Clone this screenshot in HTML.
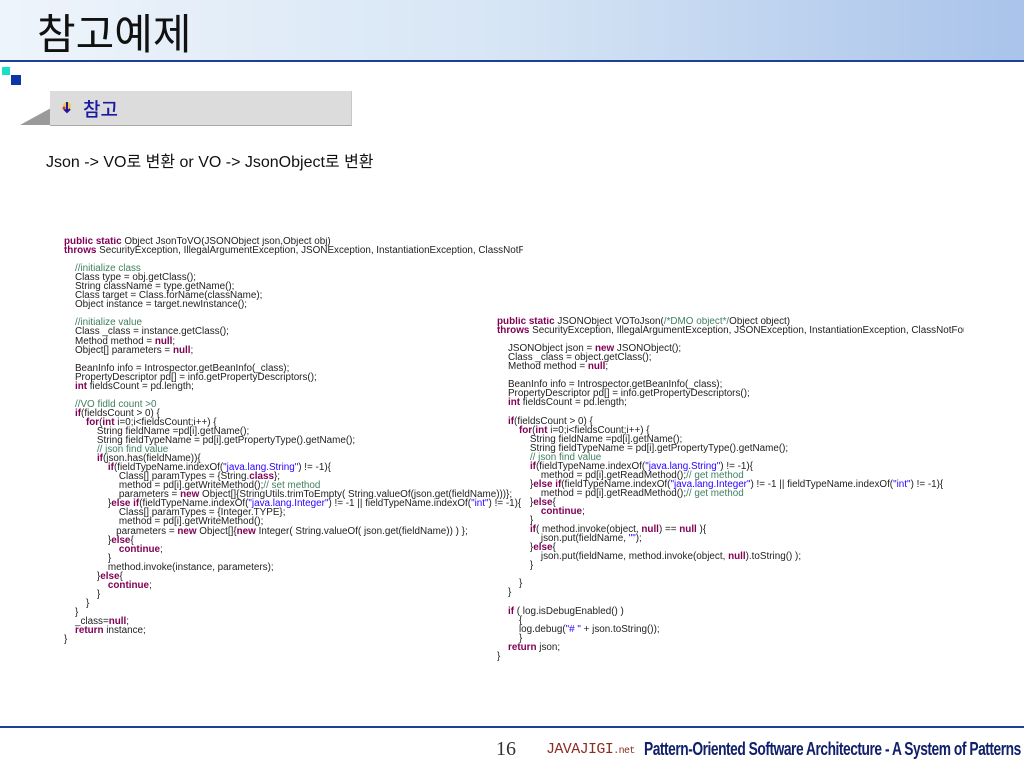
<!DOCTYPE html>
<html><head><meta charset="utf-8"><style>
body{margin:0;width:1024px;height:768px;background:#fff;position:relative;overflow:hidden;font-family:"Liberation Sans","Noto Sans CJK KR",sans-serif}
.hdr{position:absolute;left:0;top:0;width:1024px;height:60px;background:linear-gradient(90deg,#eef4fb 0%,#d6e5f5 50%,#a9c3ea 100%)}
.hline{position:absolute;left:0;top:60px;width:1024px;height:2px;background:#1f3f96}
.title{position:absolute;left:37px;top:4px;font-size:42px;color:#111;font-family:"Noto Sans CJK KR",sans-serif;font-weight:400;letter-spacing:0px;line-height:56px}
.sq1{position:absolute;left:2px;top:67px;width:8px;height:8px;background:#19e0c4}
.sq2{position:absolute;left:11px;top:75px;width:10px;height:10px;background:#0a36a6}
.box{position:absolute;left:50px;top:91px;width:301px;height:34px;background:#dcdcdc;border-bottom:1px solid #a8a8a8;border-right:1px solid #c8c8c8}
.tri{position:absolute;left:20px;top:108px;width:0;height:0;border-top:17px solid transparent;border-right:31px solid #9a9a9a}
.box span{position:absolute;left:33px;top:4px;font-size:19px;color:#1a1aa0;font-family:"Noto Sans CJK KR",sans-serif;font-weight:500}
.ic{position:absolute;left:62px;top:100px;width:10px;height:14px}
.sub{position:absolute;left:46px;top:148px;font-size:16px;color:#111}
pre{position:absolute;margin:0;font-family:"Liberation Sans","Noto Sans CJK KR",sans-serif;font-size:9.9px;line-height:9.05px;color:#222;overflow:hidden;white-space:pre}
.k{color:#7f0055;font-weight:bold}.c{color:#3f7f5f}.s{color:#2a00ff}
.fline{position:absolute;left:0;top:726px;width:1024px;height:2px;background:#1f3f96}
.num{position:absolute;left:496px;top:738px;font-size:20px;font-family:"Liberation Serif",serif;color:#333}
.jv{position:absolute;left:546px;top:741px;font-family:"Liberation Mono",monospace;font-size:15px;color:#8a2e24;letter-spacing:-0.6px;white-space:nowrap}
.jv small{font-size:10px}
.pat{position:absolute;left:644px;top:739px;font-size:18px;color:#10206a;font-weight:bold;letter-spacing:-0.6px;white-space:nowrap;transform:scaleX(0.765);transform-origin:left}
</style></head><body>
<div class="hdr"></div><div class="hline"></div>
<div class="title">참고예제</div>
<div class="sq1"></div><div class="sq2"></div>
<div class="tri"></div>
<div class="box"><span>참고</span></div>
<svg class="ic" viewBox="0 0 10 14"><circle cx="5" cy="6" r="4" fill="#f4c84a"/><path d="M5 2v10M2 9l3 3 3-3" stroke="#1a1aa0" stroke-width="2" fill="none"/><circle cx="2" cy="8" r="1.5" fill="#e03030"/></svg>
<div class="sub">Json -&gt; VO로 변환 or VO -&gt; JsonObject로 변환</div>
<pre style="left:64px;top:237px;width:459px;height:410px"><span class="k">public static</span> Object JsonToVO(JSONObject json,Object obj)
<span class="k">throws</span> SecurityException, IllegalArgumentException, JSONException, InstantiationException, ClassNotFoundException

    <span class="c">//initialize class</span>
    Class type = obj.getClass();
    String className = type.getName();
    Class target = Class.forName(className);
    Object instance = target.newInstance();

    <span class="c">//initialize value</span>
    Class _class = instance.getClass();
    Method method = <span class="k">null</span>;
    Object[] parameters = <span class="k">null</span>;

    BeanInfo info = Introspector.getBeanInfo(_class);
    PropertyDescriptor pd[] = info.getPropertyDescriptors();
    <span class="k">int</span> fieldsCount = pd.length;

    <span class="c">//VO fidld count &gt;0</span>
    <span class="k">if</span>(fieldsCount &gt; 0) {
        <span class="k">for</span>(<span class="k">int</span> i=0;i&lt;fieldsCount;i++) {
            String fieldName =pd[i].getName();
            String fieldTypeName = pd[i].getPropertyType().getName();
            <span class="c">// json find value</span>
            <span class="k">if</span>(json.has(fieldName)){
                <span class="k">if</span>(fieldTypeName.indexOf(<span class="s">"java.lang.String"</span>) != -1){
                    Class[] paramTypes = {String.<span class="k">class</span>};
                    method = pd[i].getWriteMethod();<span class="c">// set method</span>
                    parameters = <span class="k">new</span> Object[]{StringUtils.trimToEmpty( String.valueOf(json.get(fieldName)))};
                }<span class="k">else if</span>(fieldTypeName.indexOf(<span class="s">"java.lang.Integer"</span>) != -1 || fieldTypeName.indexOf(<span class="s">"int"</span>) != -1){
                    Class[] paramTypes = {Integer.TYPE};
                    method = pd[i].getWriteMethod();
                   parameters = <span class="k">new</span> Object[]{<span class="k">new</span> Integer( String.valueOf( json.get(fieldName)) ) };
                }<span class="k">else</span>{
                    <span class="k">continue</span>;
                }
                method.invoke(instance, parameters);
            }<span class="k">else</span>{
                <span class="k">continue</span>;
            }
        }
    }
    _class=<span class="k">null</span>;
    <span class="k">return</span> instance;
}</pre>
<pre style="left:497px;top:317px;width:467px;height:360px"><span class="k">public static</span> JSONObject VOToJson(<span class="c">/*DMO object*/</span>Object object)
<span class="k">throws</span> SecurityException, IllegalArgumentException, JSONException, InstantiationException, ClassNotFoundException

    JSONObject json = <span class="k">new</span> JSONObject();
    Class _class = object.getClass();
    Method method = <span class="k">null</span>;

    BeanInfo info = Introspector.getBeanInfo(_class);
    PropertyDescriptor pd[] = info.getPropertyDescriptors();
    <span class="k">int</span> fieldsCount = pd.length;

    <span class="k">if</span>(fieldsCount &gt; 0) {
        <span class="k">for</span>(<span class="k">int</span> i=0;i&lt;fieldsCount;i++) {
            String fieldName =pd[i].getName();
            String fieldTypeName = pd[i].getPropertyType().getName();
            <span class="c">// json find value</span>
            <span class="k">if</span>(fieldTypeName.indexOf(<span class="s">"java.lang.String"</span>) != -1){
                method = pd[i].getReadMethod();<span class="c">// get method</span>
            }<span class="k">else if</span>(fieldTypeName.indexOf(<span class="s">"java.lang.Integer"</span>) != -1 || fieldTypeName.indexOf(<span class="s">"int"</span>) != -1){
                method = pd[i].getReadMethod();<span class="c">// get method</span>
            }<span class="k">else</span>{
                <span class="k">continue</span>;
            }
            <span class="k">if</span>( method.invoke(object, <span class="k">null</span>) == <span class="k">null</span> ){
                json.put(fieldName, <span class="s">""</span>);
            }<span class="k">else</span>{
                json.put(fieldName, method.invoke(object, <span class="k">null</span>).toString() );
            }

        }
    }

    <span class="k">if</span> ( log.isDebugEnabled() )
        {
        log.debug(<span class="s">"# "</span> + json.toString());
        }
    <span class="k">return</span> json;
}</pre>
<div class="fline"></div>
<div class="num">16</div>
<div class="jv">JAVAJIGI<small>.net</small></div>
<div class="pat">Pattern-Oriented Software Architecture - A System of Patterns</div>
</body></html>
